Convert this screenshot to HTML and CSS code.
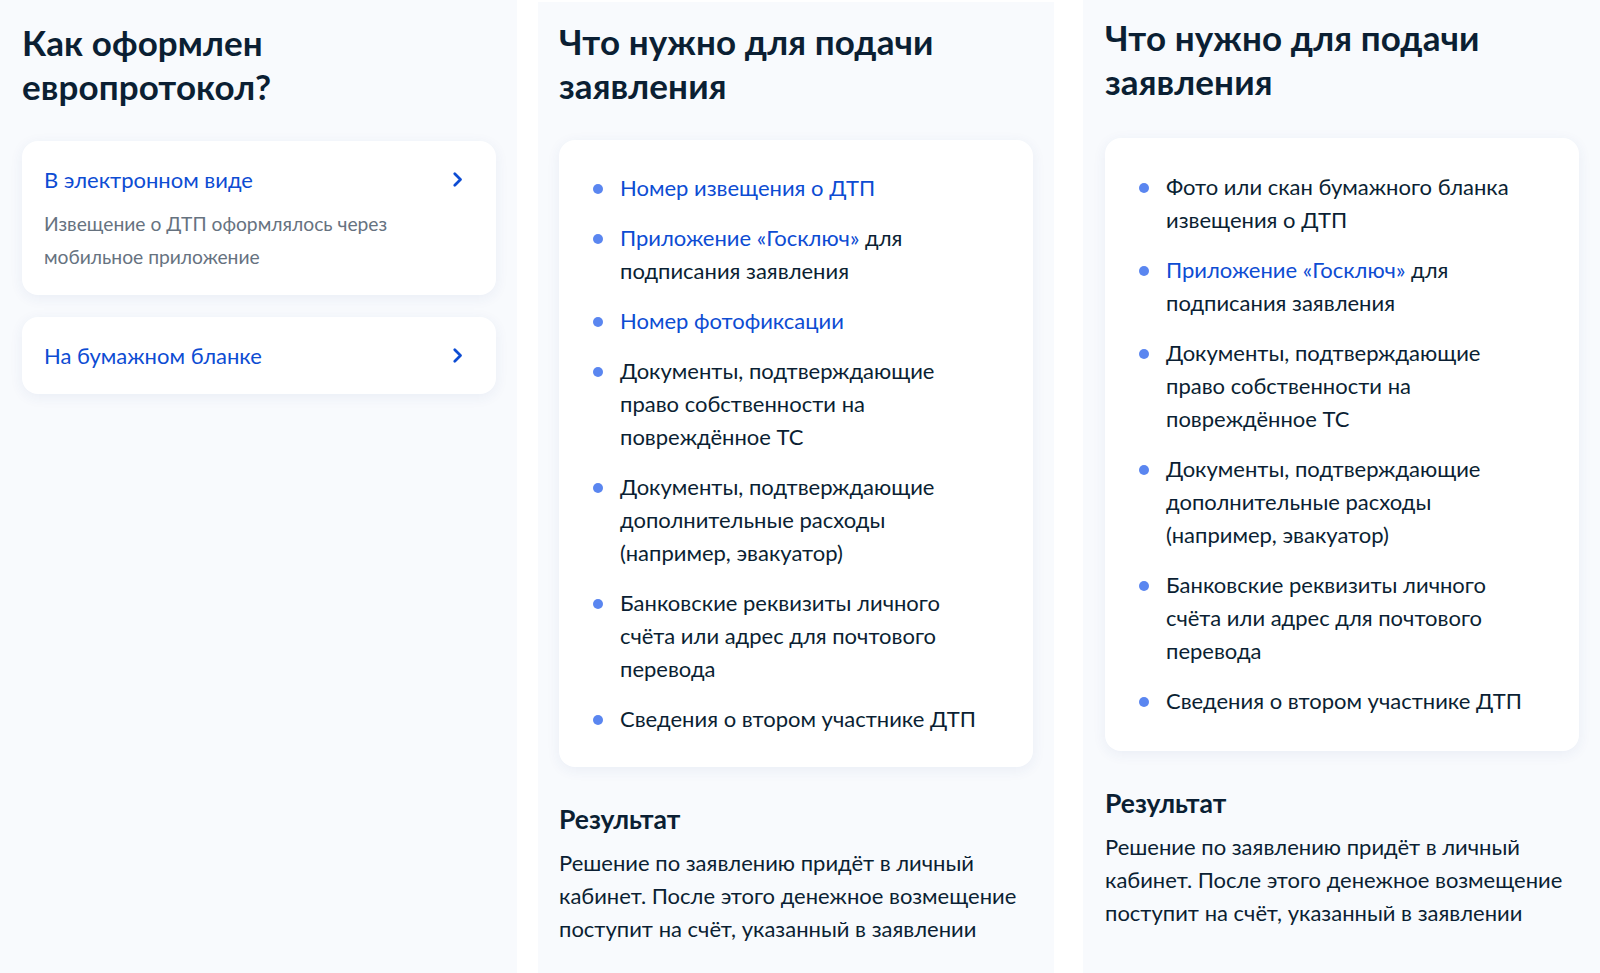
FILE: index.html
```html
<!DOCTYPE html>
<html lang="ru">
<head>
<meta charset="utf-8">
<title>Европротокол</title>
<link rel="stylesheet" href="styles.css">
</head>
<body>
<section class="panel panel-first">
  <h2 class="panel-title">Как оформлен европротокол?</h2>
  <a class="card option" href="#">
    <div class="option-head">
      <span class="option-title">В электронном виде</span>
      <svg class="chevron" viewBox="0 0 24 24" width="33" height="33"><path d="M10 7.8l4.2 4.2-4.2 4.2" fill="none" stroke="#0d4cd3" stroke-width="2" stroke-linecap="round" stroke-linejoin="round"/></svg>
    </div>
    <p class="option-desc">Извещение о ДТП оформлялось через мобильное приложение</p>
  </a>
  <a class="card option" href="#">
    <div class="option-head">
      <span class="option-title">На бумажном бланке</span>
      <svg class="chevron" viewBox="0 0 24 24" width="33" height="33"><path d="M10 7.8l4.2 4.2-4.2 4.2" fill="none" stroke="#0d4cd3" stroke-width="2" stroke-linecap="round" stroke-linejoin="round"/></svg>
    </div>
  </a>
</section>

<section class="panel panel-second">
  <h2 class="panel-title">Что нужно для подачи заявления</h2>
  <div class="card list-card">
    <ul class="doc-list">
      <li><a href="#">Номер извещения о ДТП</a></li>
      <li><a href="#">Приложение «Госключ»</a> для подписания заявления</li>
      <li><a href="#">Номер фотофиксации</a></li>
      <li>Документы, подтверждающие право собственности на повреждённое ТС</li>
      <li>Документы, подтверждающие дополнительные расходы (например, эвакуатор)</li>
      <li>Банковские реквизиты личного счёта или адрес для почтового перевода</li>
      <li>Сведения о втором участнике ДТП</li>
    </ul>
  </div>
  <h3 class="result-title">Результат</h3>
  <p class="result-text">Решение по заявлению придёт в личный кабинет. После этого денежное возмещение поступит на счёт, указанный в заявлении</p>
</section>

<section class="panel panel-third">
  <h2 class="panel-title">Что нужно для подачи заявления</h2>
  <div class="card list-card">
    <ul class="doc-list">
      <li>Фото или скан бумажного бланка извещения о ДТП</li>
      <li><a href="#">Приложение «Госключ»</a> для подписания заявления</li>
      <li>Документы, подтверждающие право собственности на повреждённое ТС</li>
      <li>Документы, подтверждающие дополнительные расходы (например, эвакуатор)</li>
      <li>Банковские реквизиты личного счёта или адрес для почтового перевода</li>
      <li>Сведения о втором участнике ДТП</li>
    </ul>
  </div>
  <h3 class="result-title">Результат</h3>
  <p class="result-text">Решение по заявлению придёт в личный кабинет. После этого денежное возмещение поступит на счёт, указанный в заявлении</p>
</section>
</body>
</html>
```

FILE: styles.css
```css
* { box-sizing: border-box; }

html, body {
  margin: 0;
  padding: 0;
  background: #ffffff;
}

body {
  display: flex;
  align-items: stretch;
  height: 973px;
  overflow: hidden;
  font-family: Lato, "Noto Sans", "Liberation Sans", sans-serif;
  color: #0b1f33;
}

.panel {
  background: #f8fafd;
  padding-left: 22px;
  padding-right: 21px;
}

.panel-first {
  width: 517px;
  padding-top: 20px;
}

.panel-second {
  width: 516px;
  margin-left: 21px;
  margin-top: 2px;
  padding-top: 17px;
  padding-left: 21px;
}

.panel-third {
  width: 517px;
  margin-left: 29px;
  padding-top: 15px;
}

.panel-third .panel-title {
  margin-bottom: 35px;
}

.panel-title {
  margin: 0 0 33px;
  font-size: 35px;
  line-height: 44px;
  font-weight: 700;
  letter-spacing: 0.1px;
  color: #0b1f33;
}

.card {
  display: block;
  background: #ffffff;
  border-radius: 16px;
  box-shadow: 0 3px 14px rgba(40, 70, 140, 0.07);
}

.option {
  padding: 22px;
  margin-bottom: 22px;
  text-decoration: none;
}

.option-head {
  display: flex;
  align-items: center;
  justify-content: space-between;
  height: 33px;
}

.option-title {
  font-size: 22px;
  line-height: 33px;
  color: #0d4cd3;
}

.chevron {
  display: block;
  flex: none;
}

.option-desc {
  margin: 11px 0 0;
  font-size: 19.25px;
  line-height: 33px;
  color: #66727f;
  max-width: 360px;
}

.list-card {
  padding: 31px 48px 32px 32px;
}

.panel-third .list-card {
  padding-top: 32px;
  padding-bottom: 34px;
}

.doc-list {
  list-style: none;
  margin: 0;
  padding: 0;
}

.doc-list li {
  position: relative;
  padding-left: 29px;
  font-size: 22px;
  line-height: 33px;
  color: #0b1f33;
}

.doc-list li + li {
  margin-top: 17px;
}

.doc-list li::before {
  content: "";
  position: absolute;
  left: 2px;
  top: 13px;
  width: 10px;
  height: 10px;
  border-radius: 50%;
  background: #5a86f0;
}

.doc-list a {
  color: #0d4cd3;
  text-decoration: none;
}

.result-title {
  margin: 36px 0 0;
  font-size: 26.5px;
  line-height: 33px;
  font-weight: 700;
  color: #0b1f33;
}

.result-text {
  margin: 10px 0 0;
  font-size: 22px;
  line-height: 33px;
  color: #0b1f33;
}
```
